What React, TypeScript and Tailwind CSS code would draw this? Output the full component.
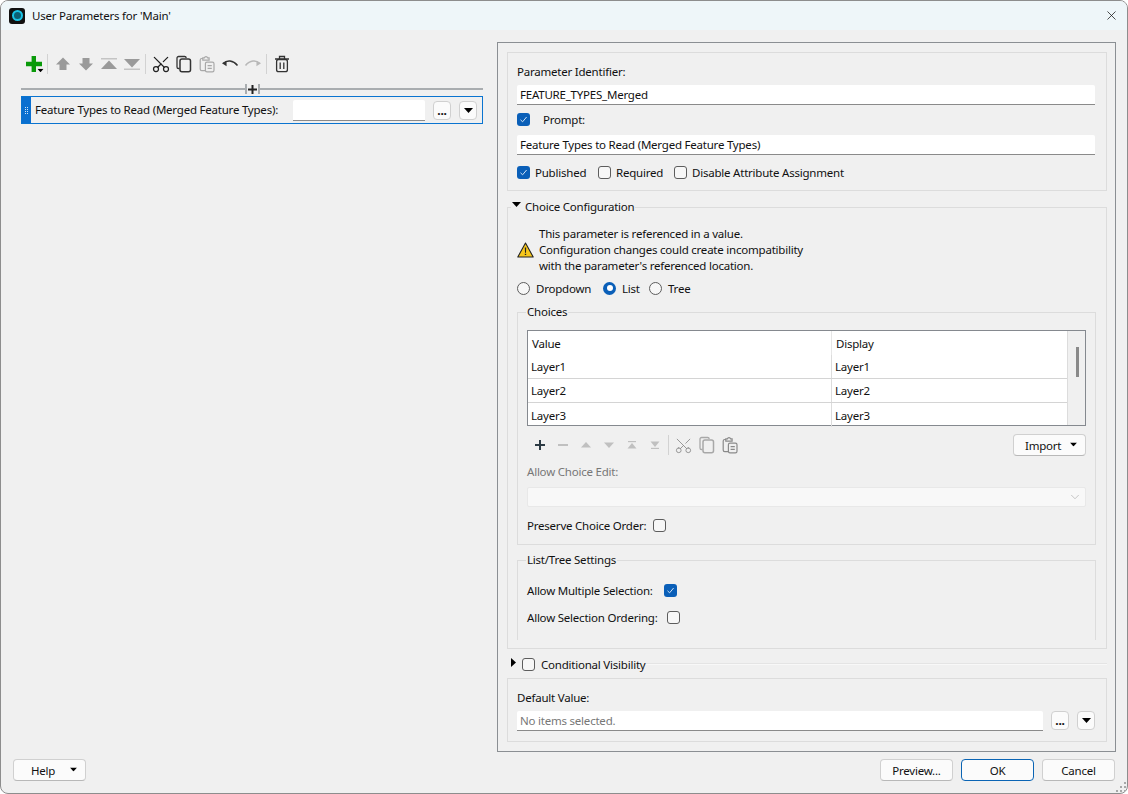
import { Scissors, X, ChevronDown } from "lucide-react";
import type { ReactNode } from "react";

function Check({ on = false }: { on?: boolean }) {
  if (on) {
    return (
      <span className="flex w-[13px] h-[13px] shrink-0 items-center justify-center rounded-[3px] bg-[#0a5fb8]">
        <svg width="9" height="9" viewBox="0 0 9 9" fill="none" stroke="#cfe3f7" strokeWidth="1">
          <path d="M1.5 4.8 3.6 6.8 7.6 2" />
        </svg>
      </span>
    );
  }
  return <span className="block w-[13px] h-[13px] shrink-0 rounded-[3px] border border-[#5d5d5d] bg-[#f7f7f7]" />;
}

function Radio({ on = false }: { on?: boolean }) {
  if (on) {
    return (
      <span className="flex w-[13px] h-[13px] shrink-0 items-center justify-center rounded-full bg-[#0a5fb8]">
        <span className="block w-[6px] h-[6px] rounded-full bg-white" />
      </span>
    );
  }
  return <span className="block w-[13px] h-[13px] shrink-0 rounded-full border border-[#5d5d5d] bg-[#f7f7f7]" />;
}

function Caret({ className = "" }: { className?: string }) {
  return (
    <svg className={className} width="9" height="5" viewBox="0 0 9 5" fill="#000">
      <path d="M0 0h9L4.5 5z" />
    </svg>
  );
}

function SmallBtn({ children }: { children: ReactNode }) {
  return (
    <button className="flex w-[18px] h-[19px] shrink-0 items-center justify-center rounded-[4px] border border-[#d0d0d0] bg-[#fbfbfb]">
      {children}
    </button>
  );
}

function Dots() {
  return <span className="block font-bold leading-[10px] mt-[1px] text-[12px]">...</span>;
}

function Field({ value, className = "" }: { value: string; className?: string }) {
  return (
    <div className={`flex h-[20px] items-center border-b border-[#8a8a8a] bg-white pl-[3px] pt-[1px] rounded-t-[2px] ${className}`}>
      {value}
    </div>
  );
}

function DlgBtn({ children, primary = false }: { children: ReactNode; primary?: boolean }) {
  return (
    <button
      className={`flex w-[73px] h-[22px] pt-[1px] items-center justify-center rounded-[4px] border bg-[#fbfbfb] ${
        primary ? "border-[#0a64b4]" : "border-[#d0d0d0] border-b-[#b8b8b8]"
      }`}
    >
      {children}
    </button>
  );
}

function MenuBtn({ label, labelClass }: { label: string; labelClass: string }) {
  return (
    <button className="relative flex w-[73px] h-[22px] pt-[1px] shrink-0 items-center rounded-[4px] border border-[#d0d0d0] border-b-[#b8b8b8] bg-[#fbfbfb]">
      <span className={labelClass}>{label}</span>
      <Caret className="absolute right-[7px] top-[7px] scale-[0.8]" />
    </button>
  );
}

/* toolbar glyphs, 18x18 box */
function Glyph({ children, size = 18 }: { children: ReactNode; size?: number }) {
  return (
    <svg width={size} height={size} viewBox="0 0 18 18" fill="none">
      {children}
    </svg>
  );
}

const ArrowUp = ({ c = "#9a9a9a" }: { c?: string }) => (
  <Glyph>
    <path d="M9 2.5 16 9.5H12.5V15H5.5V9.5H2z" fill={c} />
  </Glyph>
);
const ArrowDown = ({ c = "#9a9a9a" }: { c?: string }) => (
  <Glyph>
    <path d="M9 15.5 16 8.5H12.5V3H5.5V8.5H2z" fill={c} />
  </Glyph>
);
const ToTop = ({ c = "#9a9a9a" }: { c?: string }) => (
  <Glyph>
    <path d="M1 3h16v1.6H1z" fill="#c4c4c4" />
    <path d="M9 5.5 17 14H1z" fill={c} />
  </Glyph>
);
const ToBottom = ({ c = "#9a9a9a" }: { c?: string }) => (
  <Glyph>
    <path d="M1 13.4h16V15H1z" fill="#c4c4c4" />
    <path d="M9 12.5 17 4H1z" fill={c} />
  </Glyph>
);
const CopyIcon = ({ c = "#333" }: { c?: string }) => (
  <Glyph>
    <path d="M4.5 13.5H3.6A1.6 1.6 0 0 1 2 11.9V3.1A1.6 1.6 0 0 1 3.6 1.5h6A1.6 1.6 0 0 1 11.2 3" stroke={c} strokeWidth="1.3" />
    <rect x="5" y="4" width="10.5" height="12.8" rx="2" stroke={c} strokeWidth="1.5" />
  </Glyph>
);
const PasteIcon = ({ c = "#a8a8a8" }: { c?: string }) => (
  <Glyph>
    <path d="M5 3.5H3.8A1.6 1.6 0 0 0 2.2 5.1v9A1.6 1.6 0 0 0 3.8 15.7H7" stroke={c} strokeWidth="1.2" />
    <path d="M4.8 5.2V2.8h1.6A1.7 1.7 0 0 1 9.6 2.8h1.5v2.4z" stroke={c} strokeWidth="1.2" />
    <rect x="7.4" y="7.2" width="8.6" height="9.6" rx="1.6" stroke={c} strokeWidth="1.2" />
    <path d="M9.6 10.6h4.2M9.6 13.4h4.2" stroke={c} strokeWidth="1.1" />
  </Glyph>
);
const Sep = () => <span className="block w-px h-[20px] bg-[#d2d2d2]" />;

function ToolCell({ w = "w-[23px]", children }: { w?: string; children: ReactNode }) {
  return <span className={`flex ${w} h-[20px] shrink-0 items-center justify-center`}>{children}</span>;
}

function MainToolbar() {
  return (
    <div className="flex h-[20px] mt-[24px] ml-[24px] items-center">
      <span className="relative block w-[18px] h-[18px] shrink-0">
        <svg width="18" height="18" viewBox="0 0 18 18">
          <path d="M6.6 1h4.4v5.8H17v4.4h-6V17H6.600V11.200H1V6.800H6.600z" fill="#0a9a0a" />
        </svg>
        <Caret className="absolute right-[-2px] bottom-[0px] scale-[0.7]" />
      </span>
      <span className="ml-[4px] mr-[3px]"><Sep /></span>
      <ToolCell><ArrowUp /></ToolCell>
      <ToolCell><ArrowDown /></ToolCell>
      <ToolCell><ToTop /></ToolCell>
      <ToolCell><ToBottom /></ToolCell>
      <span className="ml-[2px] mr-[3px]"><Sep /></span>
      <ToolCell><Scissors size={20} strokeWidth={1.5} color="#222" className="rotate-[-90deg]" /></ToolCell>
      <ToolCell><CopyIcon /></ToolCell>
      <ToolCell><PasteIcon /></ToolCell>
      <ToolCell>
        <Glyph>
          <path d="M2 8.500C6 4.800 12 5 16.500 10.500" stroke="#333" strokeWidth="1.5" />
          <path d="M1 8.200 5.500 6.200 5.600 11.200z" fill="#333" />
        </Glyph>
      </ToolCell>
      <ToolCell>
        <Glyph>
          <path d="M16 8.500C12 4.800 6 5 1.500 10.500" stroke="#b8b8b8" strokeWidth="1.5" />
          <path d="M17 8.200 12.500 6.200 12.400 11.200z" fill="#b8b8b8" />
        </Glyph>
      </ToolCell>
      <span className="ml-[2px] mr-[3px]"><Sep /></span>
      <ToolCell>
        <Glyph>
          <path d="M2 4h14M6.500 3.500V1.500h5v2" stroke="#333" strokeWidth="1.3" />
          <rect x="3.600" y="4.500" width="10.800" height="12.200" rx="2" stroke="#333" strokeWidth="1.3" />
          <path d="M7.200 7.500v6.500M10.800 7.500v6.500" stroke="#333" strokeWidth="1.300" />
        </Glyph>
      </ToolCell>
    </div>
  );
}

function ChoicesToolbar() {
  return (
    <div className="flex h-[22px] ml-[1px] items-center">
      <ToolCell>
        <svg width="12" height="12" viewBox="0 0 12 12"><path d="M5 1h2v4h4v2H7v4H5V7H1V5h4z" fill="#2c3a44" /></svg>
      </ToolCell>
      <ToolCell>
        <svg width="12" height="12" viewBox="0 0 12 12"><path d="M1 5.200h10v1.600H1z" fill="#b4b4b4" /></svg>
      </ToolCell>
      <ToolCell>
        <svg width="10" height="6" viewBox="0 0 10 6"><path d="M5 0l5 5.500H0z" fill="#c0c0c0" /></svg>
      </ToolCell>
      <ToolCell>
        <svg width="10" height="6" viewBox="0 0 10 6"><path d="M5 6l5-5.500H0z" fill="#c0c0c0" /></svg>
      </ToolCell>
      <ToolCell>
        <svg width="10" height="10" viewBox="0 0 10 10"><path d="M1 1h8v1.200H1z" fill="#c0c0c0" /><path d="M5 3l4.500 5.500H.5z" fill="#c0c0c0" /></svg>
      </ToolCell>
      <ToolCell>
        <svg width="10" height="10" viewBox="0 0 10 10"><path d="M1 7.800h8V9H1z" fill="#c0c0c0" /><path d="M5 7l4.500-5.500H.5z" fill="#c0c0c0" /></svg>
      </ToolCell>
      <span className="block w-px h-[20px] bg-[#d2d2d2] ml-[2px] mr-[3px]" />
      <ToolCell><Scissors size={19} strokeWidth={1.1} color="#8a8a8a" className="rotate-[-90deg]" /></ToolCell>
      <ToolCell><CopyIcon c="#a8a8a8" /></ToolCell>
      <ToolCell><PasteIcon c="#8a8a8a" /></ToolCell>
    </div>
  );
}

function Row({ children, className = "" }: { children: ReactNode; className?: string }) {
  return <div className={`flex h-[20px] items-center ${className}`}>{children}</div>;
}

function Txt({ children, className = "" }: { children: ReactNode; className?: string }) {
  return <span className={`block pt-[1px] whitespace-nowrap ${className}`}>{children}</span>;
}

/* group box with its title sitting on the top line */
function GroupTitle({ children, className }: { children: ReactNode; className: string }) {
  return <span className={`absolute top-[-9px] h-[16px] flex items-center bg-[#f0f0f0] ${className}`}>{children}</span>;
}

const rows = ["Layer1", "Layer2", "Layer3"];

function ChoicesTable() {
  return (
    <div className="flex w-[559px] h-[96px] ml-[9px] mt-[17px] border border-[#85898f] bg-white">
      <div className="flex-1 min-w-0 flex flex-col">
        <div className="flex h-[24px] shrink-0">
          <div className="flex w-[303px] items-center pl-[4px] pt-[1px]">Value</div>
          <div className="flex flex-1 items-center pl-[4px] pt-[1px] border-l border-[#e6e6e6]">Display</div>
        </div>
        {rows.map((name, i) => (
          <div key={name} className={`flex h-[24px] shrink-0 ${i < 2 ? "border-b border-[#d4d4d4]" : ""}`}>
            <div className="flex w-[303px] items-center pl-[3px] pt-[1px]">{name}</div>
            <div className="flex flex-1 items-center pl-[3px] pt-[1px] border-l border-[#dcdcdc]">{name}</div>
          </div>
        ))}
      </div>
      <div className="w-[18px] shrink-0 border-l border-[#dcdcdc] bg-[#f0f0f0] pt-[16px] pl-[8px]">
        <div className="w-[3px] h-[30px] bg-[#8a8a8a]" />
      </div>
    </div>
  );
}

export default function App() {
  return (
    <div className="w-[1128px] h-[794px] overflow-hidden bg-white font-['Noto_Sans',sans-serif] text-[11.5px] tracking-[-0.22px] text-[#111]">
      <div className="flex flex-col w-full h-full rounded-[8px] border border-[#8d8d8d] bg-[#f0f0f0] overflow-hidden">
        {/* Title bar */}
        <div className="flex h-[29px] shrink-0 items-center bg-[#eef6f9] pl-[8px]">
          <span className="flex w-[16px] h-[16px] items-center justify-center rounded-[3px] bg-[#111]">
            <span className="block w-[11px] h-[11px] rounded-full border-[2px] border-[#19c3e6] bg-[#0c5f73]" />
          </span>
          <span className="ml-[7px]">User Parameters for 'Main'</span>
          <X size={15} strokeWidth={1.2} color="#111" className="ml-auto mr-[8px]" />
        </div>

        <div className="flex flex-1 min-h-0">
          {/* Left pane */}
          <div className="w-[496px] shrink-0 flex flex-col">
            <MainToolbar />
            <div className="relative h-[2px] ml-[20px] mr-[14px] mt-[14px] bg-[#a9adb0] shrink-0">
              <span className="absolute left-[224px] top-[-4px] flex w-[15px] h-[10px] items-center justify-center border-x-2 border-[#a9adb0] bg-[#f0f0f0]">
                <svg width="9" height="9" viewBox="0 0 9 9"><path d="M3.500 0h2v3.500H9v2H5.500V9h-2V5.500H0v-2h3.500z" fill="#222" /></svg>
              </span>
            </div>
            <div className="flex h-[28px] ml-[20px] mr-[14px] mt-[6px] items-center border border-[#0a74d0]">
              <span className="flex w-[9px] h-full shrink-0 items-center justify-center bg-[#0a6fd0]">
                <span className="grid grid-cols-2 gap-[1px]">
                  {[0, 1, 2, 3, 4, 5, 6, 7].map((n) => (
                    <span key={n} className="block w-px h-px bg-[#cfe4f8]" />
                  ))}
                </span>
              </span>
              <span className="ml-[4px] w-[258px] shrink-0 whitespace-nowrap">Feature Types to Read (Merged Feature Types):</span>
              <Field value="" className="w-[132px] h-[21px] shrink-0" />
              <span className="ml-[8px]"><SmallBtn><Dots /></SmallBtn></span>
              <span className="ml-[8px]"><SmallBtn><Caret /></SmallBtn></span>
            </div>
          </div>

          {/* Right pane */}
          <div className="flex flex-col w-[619px] h-[710px] mt-[12px] border border-[#8b8f93] pt-[9px] pl-[9px]">
            <div className="w-[600px] h-[139px] shrink-0 border border-[#dcdcdc] pl-[9px] pr-[11px] pt-[8px]">
              <Row><Txt>Parameter Identifier:</Txt></Row>
              <Field value="FEATURE_TYPES_Merged" className="mt-[4px]" />
              <Row className="mt-[4px]">
                <Check on />
                <Txt className="ml-[13px]">Prompt:</Txt>
              </Row>
              <Field value="Feature Types to Read (Merged Feature Types)" className="mt-[6px]" />
              <Row className="mt-[7px]">
                <Check on />
                <Txt className="ml-[5px] w-[63px]">Published</Txt>
                <Check />
                <Txt className="ml-[5px] w-[58px]">Required</Txt>
                <Check />
                <Txt className="ml-[5px]">Disable Attribute Assignment</Txt>
              </Row>
            </div>

            {/* Choice Configuration */}
            <div className="relative w-[600px] h-[442px] shrink-0 mt-[16px] border border-[#dcdcdc]">
              <GroupTitle className="left-[3px] pl-[1px] pr-[1px]">
                <Caret className="mt-[-5px]" />
                <span className="ml-[4px]">Choice Configuration</span>
              </GroupTitle>
              <div className="h-[432px] overflow-hidden pl-[9px]">
                <div className="flex items-center mt-[17px]">
                  <svg width="17" height="16" viewBox="0 0 17 16" className="shrink-0">
                    <path d="M8.500 1 16.200 15H.8z" fill="#f6c61c" stroke="#222" strokeWidth="1.100" strokeLinejoin="round" />
                    <path d="M7.800 5.500h1.400l-.2 5.200H8zM7.800 11.700h1.400v1.400H7.800z" fill="#222" />
                  </svg>
                  <div className="ml-[5px] leading-[16px] pt-[1px]">
                    <div>This parameter is referenced in a value.</div>
                    <div>Configuration changes could create incompatibility</div>
                    <div>with the parameter's referenced location.</div>
                  </div>
                </div>
                <Row className="mt-[4px]">
                  <Radio />
                  <Txt className="ml-[6px] w-[67px]">Dropdown</Txt>
                  <Radio on />
                  <Txt className="ml-[6px] w-[27px]">List</Txt>
                  <Radio />
                  <Txt className="ml-[6px]">Tree</Txt>
                </Row>

                {/* Choices */}
                <div className="relative w-[579px] h-[233px] mt-[14px] border border-[#dcdcdc]">
                  <GroupTitle className="left-[8px] px-[1px]">Choices</GroupTitle>
                  <ChoicesTable />
                  <div className="flex items-center justify-between w-[559px] ml-[9px] mt-[8px]">
                    <ChoicesToolbar />
                    <MenuBtn label="Import" labelClass="ml-[11px]" />
                  </div>
                  <div className="h-[16px] ml-[9px] mt-[8px] flex items-center text-[#777]">Allow Choice Edit:</div>
                  <div className="flex w-[559px] h-[20px] ml-[9px] mt-[7px] items-center justify-end rounded-[2px] border border-[#e8e8e8] bg-[#f8f8f8] pr-[3px]">
                    <ChevronDown size={14} strokeWidth={1} color="#a0a0a0" />
                  </div>
                  <Row className="ml-[9px] mt-[8px]">
                    <Txt className="w-[126px]">Preserve Choice Order:</Txt>
                    <Check />
                  </Row>
                </div>

                {/* List/Tree Settings */}
                <div className="relative w-[579px] mt-[15px] border-t border-x border-[#dcdcdc] pl-[9px] pt-[19px]">
                  <GroupTitle className="left-[8px] px-[1px]">List/Tree Settings</GroupTitle>
                  <Row>
                    <Txt className="w-[137px]">Allow Multiple Selection:</Txt>
                    <Check on />
                  </Row>
                  <Row className="mt-[7px]">
                    <Txt className="w-[140px]">Allow Selection Ordering:</Txt>
                    <Check />
                  </Row>
                  <Row className="mt-[7px]">Choice List Delimiter:</Row>
                </div>
              </div>
            </div>

            {/* Conditional Visibility */}
            <Row className="w-[600px] mt-[5px] shrink-0 pl-[4px]">
              <svg width="5" height="9" viewBox="0 0 5 9" fill="#000" className="shrink-0 mt-[-3px]"><path d="M0 0l5 4.500L0 9z" /></svg>
              <span className="ml-[6px]"><Check /></span>
              <Txt className="ml-[6px]">Conditional Visibility</Txt>
              <span className="flex-1 h-[2px] ml-[1px] bg-[#f8f8f8] border-t border-[#e4e4e4]" />
            </Row>

            {/* Default value */}
            <div className="w-[600px] h-[64px] shrink-0 mt-[4px] border border-[#dcdcdc] pl-[9px] pt-[8px]">
              <Row><Txt>Default Value:</Txt></Row>
              <div className="flex items-start mt-[4px]">
                <Field value="No items selected." className="w-[526px] text-[#777] shrink-0" />
                <span className="ml-[8px]"><SmallBtn><Dots /></SmallBtn></span>
                <span className="ml-[8px]"><SmallBtn><Caret /></SmallBtn></span>
              </div>
            </div>
          </div>
        </div>

        {/* Footer */}
        <div className="relative flex h-[41px] shrink-0 pt-[7px] pl-[12px] pr-[12px]">
          <MenuBtn label="Help" labelClass="ml-[17px]" />
          <div className="ml-auto flex gap-[8px]">
            <DlgBtn>Preview...</DlgBtn>
            <DlgBtn primary>OK</DlgBtn>
            <DlgBtn>Cancel</DlgBtn>
          </div>
          <svg width="10" height="10" viewBox="0 0 10 10" fill="#a8a8a8" className="absolute right-[1px] bottom-[1px]">
            <path d="M8 0h2v2H8zM4 4h2v2H4zM8 4h2v2H8zM0 8h2v2H0zM4 8h2v2H4zM8 8h2v2H8z" />
          </svg>
        </div>
      </div>
    </div>
  );
}
